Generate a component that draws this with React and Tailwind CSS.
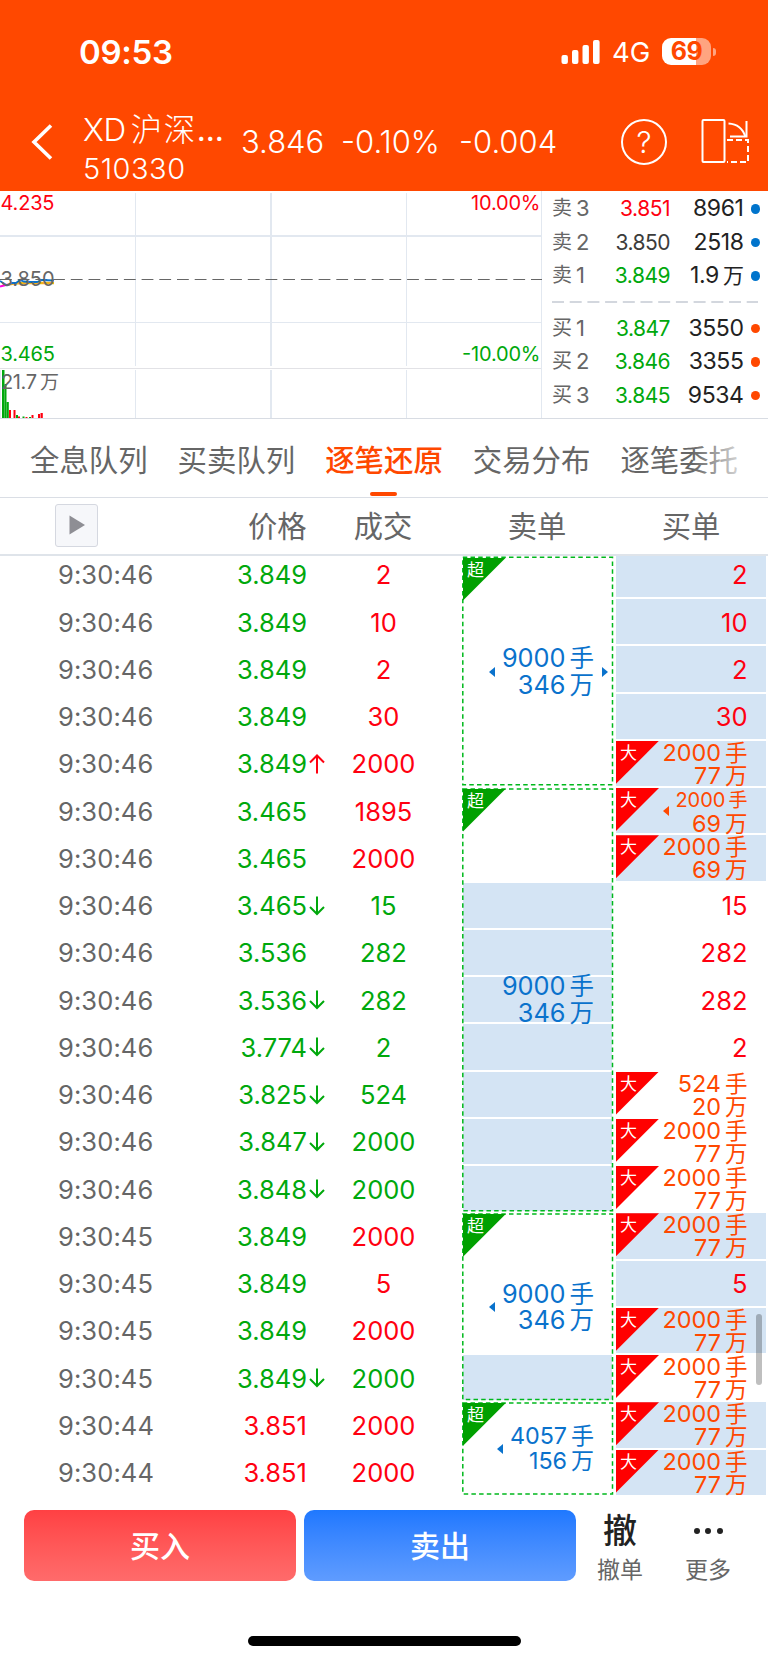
import React from "react";

const trades = [
  { time: "9:30:46", price: "3.849", vol: "2", up: true, buy: "2", fill: true },
  { time: "9:30:46", price: "3.849", vol: "10", up: true, buy: "10", fill: true },
  { time: "9:30:46", price: "3.849", vol: "2", up: true, buy: "2", fill: true },
  { time: "9:30:46", price: "3.849", vol: "30", up: true, buy: "30", fill: true },
  { time: "9:30:46", price: "3.849", dir: "up", vol: "2000", up: true, big: ["2000", "77"], fill: true },
  { time: "9:30:46", price: "3.465", vol: "1895", up: true, big: ["2000", "69"], more: true, fill: true },
  { time: "9:30:46", price: "3.465", vol: "2000", up: true, big: ["2000", "69"], fill: true },
  { time: "9:30:46", price: "3.465", dir: "down", vol: "15", buy: "15" },
  { time: "9:30:46", price: "3.536", vol: "282", buy: "282" },
  { time: "9:30:46", price: "3.536", dir: "down", vol: "282", buy: "282" },
  { time: "9:30:46", price: "3.774", dir: "down", vol: "2", buy: "2" },
  { time: "9:30:46", price: "3.825", dir: "down", vol: "524", big: ["524", "20"] },
  { time: "9:30:46", price: "3.847", dir: "down", vol: "2000", big: ["2000", "77"] },
  { time: "9:30:46", price: "3.848", dir: "down", vol: "2000", big: ["2000", "77"] },
  { time: "9:30:45", price: "3.849", vol: "2000", up: true, big: ["2000", "77"], fill: true },
  { time: "9:30:45", price: "3.849", vol: "5", up: true, buy: "5", fill: true },
  { time: "9:30:45", price: "3.849", vol: "2000", up: true, big: ["2000", "77"], fill: true },
  { time: "9:30:45", price: "3.849", dir: "down", vol: "2000", big: ["2000", "77"] },
  { time: "9:30:44", price: "3.851", high: true, vol: "2000", up: true, big: ["2000", "77"], fill: true },
  { time: "9:30:44", price: "3.851", high: true, vol: "2000", up: true, big: ["2000", "77"], fill: true },
];

const sellGroups = [
  { height: "h-[231px]", lots: "9000", amount: "346", left: true, right: true, filled: 0 },
  { height: "h-[425.25px]", lots: "9000", amount: "346", filled: 7 },
  { height: "h-[189px]", lots: "9000", amount: "346", left: true, filled: 1 },
  { height: "h-[94.5px]", lots: "4057", amount: "156", left: true, small: true, filled: 0 },
];

const book = [
  { side: "卖", level: 3, price: "3.851", color: "text-[#ff0010]", vol: "8961" },
  { side: "卖", level: 2, price: "3.850", color: "text-[#3c3c3c]", vol: "2518" },
  { side: "卖", level: 1, price: "3.849", color: "text-[#00a80c]", vol: "1.9", wan: true },
  { side: "买", level: 1, price: "3.847", color: "text-[#00a80c]", vol: "3550" },
  { side: "买", level: 2, price: "3.846", color: "text-[#00a80c]", vol: "3355" },
  { side: "买", level: 3, price: "3.845", color: "text-[#00a80c]", vol: "9534" },
];

const StatusBar = () => (
  <div className="flex h-[103px] items-center pl-[79px] pr-[52px]">
    <span className="text-[33px] leading-[40px] font-semibold tracking-[-0.3px]">09:53</span>
    <svg className="ml-auto" width="39" height="26" viewBox="0 0 39 26" fill="white">
      <rect x="0.5" y="16" width="6.4" height="9" rx="2" />
      <rect x="11" y="11" width="6.4" height="14" rx="2" />
      <rect x="21.5" y="6" width="6.4" height="19" rx="2" />
      <rect x="32" y="1" width="6.6" height="24" rx="2" />
    </svg>
    <span className="ml-[12px] w-[50px] text-[27.5px] leading-[32px]">4G</span>
    <div className="flex items-center gap-[2px]">
      <div className="flex h-[27px] w-[49px] items-center justify-center rounded-[9px] bg-[linear-gradient(90deg,#fff_34px,#ffa480_34px)] text-[25px] leading-[27px] font-bold tracking-[-0.5px] text-[#ff4800]">
        69
      </div>
      <div className="h-[8px] w-[3px] rounded-r-full bg-[#ffa480]"></div>
    </div>
  </div>
);

const TitleBar = () => (
  <div className="flex h-[88px] items-start font-light">
    <svg className="ml-[30px] mt-[20px]" width="24" height="38" viewBox="0 0 24 38" fill="none">
      <path d="M21 2.5 L4 19 L21 35.5" stroke="white" strokeWidth="3.6" />
    </svg>
    <div className="ml-[29px] w-[158px]">
      <div className="mt-[8px] whitespace-nowrap text-[31.5px] leading-[38px]">
        <span className="tracking-[-0.4px]">XD</span>
        <span className="ml-[5px] tracking-[1.5px]">沪深</span>
        <span className="font-normal">...</span>
      </div>
      <div className="text-[29px] leading-[40px] tracking-[0.5px]">510330</div>
    </div>
    <div className="mt-[20px] flex text-[31px] leading-[38px]">
      <span className="w-[100px]">3.846</span>
      <span className="w-[118px]">-0.10%</span>
      <span className="w-[124px]">-0.004</span>
    </div>
    <div className="ml-[38px] mt-[15.5px] flex h-[46px] w-[46px] items-center justify-center rounded-full border-2 border-white text-[30px] leading-[40px]">
      ?
    </div>
    <svg className="ml-[34px] mt-[15px]" width="50" height="46" viewBox="0 0 50 46" fill="none" stroke="white" strokeWidth="2">
      <rect x="1.5" y="2" width="22" height="42" rx="1" />
      <path d="M27.5 5.5 C37 6 42 11 44.5 19" />
      <path d="M45.5 3 V18.5 H29" />
      <path d="M26 22 H47 V44 H26" strokeDasharray="6 3" />
    </svg>
  </div>
);

const PriceChart = () => (
  <svg width="542" height="227" viewBox="0 1 542 227" fontSize="20">
    <g stroke="#e2e8f0" fill="none">
      <path d="M0 46 H542" strokeWidth="2" />
      <path d="M0 132.5 H542" />
      <path d="M0 178.5 H542" stroke="#e2e2e6" />
      <path d="M135.5 3 V176 M135.5 180 V228" />
      <path d="M271 3 V176 M271 180 V228" strokeWidth="2" />
      <path d="M406.5 3 V176 M406.5 180 V228" />
      <path d="M541.5 1 V228 M0.5 180 V228" />
    </g>
    <path d="M0 89.5 H542" stroke="#666" strokeWidth="1.2" strokeDasharray="11.8 5.9" />
    <path d="M0 96.5 L4 95.5 L8 94.5" stroke="#ff00e0" strokeWidth="2" fill="none" />
    <path d="M8 94.5 L14 93.5 L22 93 L54 93" stroke="#f6b21a" strokeWidth="2.5" fill="none" />
    <path d="M0 91 L7 95.5 L12 93 L16 93 L20 90 L24 91.5 L30 92 L37 92 L42 90 L54 90.5" stroke="#0a72cc" strokeWidth="1.8" fill="none" />
    <text x="0.5" y="20" fill="#ff0010" textLength="54">4.235</text>
    <text x="540.5" y="20" fill="#ff0010" textAnchor="end" textLength="69.5">10.00%</text>
    <text x="0.5" y="95.5" fill="#666" textLength="54">3.850</text>
    <text x="0.5" y="171" fill="#00a80c" textLength="54.5">3.465</text>
    <text x="540.5" y="171" fill="#00a80c" textAnchor="end" textLength="78.5">-10.00%</text>
    <g fill="#00a80c">
      <rect x="2" y="180" width="2.5" height="48" />
      <rect x="4.5" y="194" width="2" height="34" />
      <rect x="6.5" y="212" width="2.3" height="16" />
      <rect x="16" y="225" width="2" height="3" />
      <rect x="22.5" y="226.5" width="2" height="1.5" />
      <rect x="29" y="227" width="2" height="1" />
    </g>
    <g fill="#ff0010">
      <rect x="9" y="220" width="2" height="8" />
      <rect x="13.5" y="220" width="2" height="8" />
      <rect x="18" y="226.5" width="2" height="1.5" />
      <rect x="25.5" y="227" width="2" height="1" />
      <rect x="31.5" y="225" width="2" height="3" />
      <rect x="38" y="224" width="2" height="4" />
      <rect x="40.5" y="223" width="2.3" height="5" />
    </g>
    <text x="1" y="199" fill="#666" textLength="36">21.7</text>
    <text x="40" y="199" fill="#666" fontSize="19">万</text>
  </svg>
);

const OrderBook = () => (
  <div className="flex flex-1 flex-col pt-px">
    {book.map((row, i) => (
      <React.Fragment key={i}>
        {i === 3 && (
          <svg className="mt-[8px] mb-[9px] ml-[10px]" width="206" height="2">
            <path d="M0 1 H206" stroke="#d3d7de" strokeWidth="2" strokeDasharray="12 5.7" />
          </svg>
        )}
        <div className="flex h-[33.5px] items-center pl-[10px] leading-[33px]">
          <span className="w-[20px] text-[20px] text-[#666]">{row.side}</span>
          <span className="ml-[4px] w-[20px] text-[22px] text-[#666]">{row.level}</span>
          <span className={`w-[74px] text-right text-[21px] tracking-[-0.5px] ${row.color}`}>{row.price}</span>
          <span className="w-[73.5px] text-right text-[23px] tracking-[-0.4px] text-[#222]">
            {row.vol}
            {row.wan && <span className="ml-[4px] text-[21px]">万</span>}
          </span>
          <span className={`ml-[7px] h-[9.5px] w-[9.5px] rounded-full ${i < 3 ? "bg-[#0074cc]" : "bg-[#ff4800]"}`}></span>
        </div>
      </React.Fragment>
    ))}
  </div>
);

const Tabs = () => (
  <div className="relative flex h-[79px] justify-between border-b border-[#dadee5] pl-[30px] pr-[30px] text-[29.4px] leading-[84px] text-[#666]">
    <span>全息队列</span>
    <span>买卖队列</span>
    <span className="relative font-medium text-[#ff4800]">
      逐笔还原
      <i className="absolute bottom-[1.5px] left-[45px] h-[4px] w-[27px] rounded-full bg-[#ff4800]"></i>
    </span>
    <span>交易分布</span>
    <span>逐笔委托</span>
    <div className="absolute right-0 top-0 h-[76px] w-[76px] bg-gradient-to-r from-white/0 to-white to-85%"></div>
  </div>
);

const TableHead = () => (
  <div className="flex h-[58px] items-center border-b-2 border-[#dfe4ea] text-[29.3px] leading-[56px] text-[#666]">
    <div className="-mt-[2px] ml-[55px] flex h-[43px] w-[43px] items-center justify-center rounded-[3px] border border-[#d5d8e0] bg-[#f6f7fa]">
      <svg width="18" height="20" viewBox="0 0 18 20">
        <path d="M1.5 0.5 L17 10 L1.5 19.5 Z" fill="#8e8e94" />
      </svg>
    </div>
    <span className="w-[208.5px] pt-[2px] text-right">价格</span>
    <span className="w-[153px] pt-[2px] text-center">成交</span>
    <span className="w-[155px] pt-[2px] text-center">卖单</span>
    <span className="w-[153px] pt-[2px] text-center">买单</span>
  </div>
);

const Arrow = ({ dir }) => (
  <svg width="16" height="20" viewBox="0 0 16 20" fill="none" strokeWidth="2" stroke={dir === "up" ? "#ff0010" : "#00a80c"}>
    {dir === "up" ? <path d="M8 19.5 V1.5 M1 8.5 L8 1.5 L15 8.5" /> : <path d="M8 0.5 V18 M1 11 L8 18 L15 11" />}
  </svg>
);

const TradeRow = ({ row }) => (
  <div className="flex h-[47.25px] items-center pt-[1px] text-[25.5px] leading-[45px]">
    <span className="w-[154px] pl-[58px] tracking-[0.1px] text-[#666]">{row.time}</span>
    <span className={`w-[153px] text-right ${row.high ? "text-[#ff0010]" : "text-[#00a80c]"}`}>{row.price}</span>
    <span className="flex w-[20px] pl-[2px]">{row.dir && <Arrow dir={row.dir} />}</span>
    <span className={`w-[113px] text-center ${row.up ? "text-[#ff0010]" : "text-[#00a80c]"}`}>{row.vol}</span>
  </div>
);

// folded corner marking large orders
const Corner = ({ label, color }) => (
  <div className={`absolute left-0 top-0 h-[43px] w-[43px] pl-[4px] text-[17px] text-white [clip-path:polygon(0_0,100%_0,0_100%)] ${color}`}>
    <span className="block pt-[2px] leading-[20px]">{label}</span>
  </div>
);

const SellGroup = ({ group }) => (
  <div className={`relative ${group.height}`}>
    <div className="flex h-full w-[150px] flex-col justify-end pl-px">
      {Array.from({ length: group.filled }).map((_, i) => (
        <div key={i} className="h-[47.25px] py-[1px]">
          <div className="h-full bg-[#d4e4f4]"></div>
        </div>
      ))}
    </div>
    <svg className="absolute inset-0 h-full w-full">
      <rect
        className="h-[calc(100%-3.5px)] w-[149.7px]"
        x="0.8"
        y={group.right ? 1.2 : 2}
        fill="none"
        stroke="#00b81c"
        strokeWidth="1.5"
        strokeDasharray="4.5 3.2"
      />
    </svg>
    <div className="absolute left-px top-[1.5px]">
      <Corner label="超" color="bg-[#00a000]" />
    </div>
    <div className="absolute inset-0 flex items-center justify-end pt-px pr-[20px] text-[#0a72cc]">
      {group.left && (
        <svg className={group.small ? "mr-[7px]" : "mr-[7px]"} width="6" height="10" viewBox="0 0 6 10">
          <path d="M0 5 L6 0 V10 Z" fill="currentColor" />
        </svg>
      )}
      <div className={`text-right ${group.small ? "text-[23.3px] leading-[23.7px]" : "text-[25.3px] leading-[25.7px]"}`}>
        <div>
          {group.lots}
          <span className={group.small ? "ml-[4px] text-[23px]" : "ml-[4px] text-[24.5px]"}>手</span>
        </div>
        <div>
          {group.amount}
          <span className={group.small ? "ml-[4px] text-[23px]" : "ml-[4px] text-[24.5px]"}>万</span>
        </div>
      </div>
      {group.right && (
        <svg className="absolute right-[6px]" width="6" height="10" viewBox="0 0 6 10">
          <path d="M6 5 L0 0 V10 Z" fill="currentColor" />
        </svg>
      )}
    </div>
  </div>
);

const BuyCell = ({ row }) => (
  <div className="h-[47.25px] py-[1px]">
    <div className={`relative flex h-full items-center justify-end pt-[1px] pr-[18.5px] ${row.fill ? "bg-[#d4e4f4]" : ""}`}>
      {row.big ? (
        <>
          <Corner label="大" color="bg-[#ff0000]" />
          {row.more && (
            <svg className="mr-[6px]" width="6" height="10" viewBox="0 0 6 10">
              <path d="M0 5 L6 0 V10 Z" fill="#ff4800" />
            </svg>
          )}
          <div className="text-right text-[23.4px] leading-[23px] text-[#ff4800]">
            <div className={row.more ? "pt-px text-[20px] leading-[22px]" : ""}>
              {row.big[0]}
              <span className={row.more ? "ml-[3px] text-[19px]" : "ml-[4px] text-[22.5px]"}>手</span>
            </div>
            <div>
              {row.big[1]}
              <span className="ml-[4px] text-[22.5px]">万</span>
            </div>
          </div>
        </>
      ) : (
        <span className="text-[25.5px] leading-[43px] text-[#ff0010]">{row.buy}</span>
      )}
    </div>
  </div>
);

const BottomBar = () => (
  <div className="flex h-[167px] flex-col">
    <div className="flex pl-[24px] pt-[14px] text-[30px] leading-[72px] font-medium text-white">
      <div className="h-[71px] w-[272px] rounded-[10px] bg-gradient-to-b from-[#ff4043] to-[#ff6b6b] text-center">买入</div>
      <div className="ml-[8px] h-[71px] w-[272px] rounded-[10px] bg-gradient-to-b from-[#1e78ff] to-[#5f9cff] text-center">卖出</div>
      <div className="flex w-[88px] flex-col items-center text-[#222]">
        <span className="text-[34px] leading-[41px]">撤</span>
        <span className="text-[23px] leading-[38px] font-normal text-[#666]">撤单</span>
      </div>
      <div className="flex w-[88px] flex-col items-center text-[#222]">
        <span className="flex h-[41px] items-center gap-[5.5px]">
          <i className="h-[6px] w-[6px] rounded-full bg-[#222]"></i>
          <i className="h-[6px] w-[6px] rounded-full bg-[#222]"></i>
          <i className="h-[6px] w-[6px] rounded-full bg-[#222]"></i>
        </span>
        <span className="text-[23px] leading-[38px] font-normal text-[#666]">更多</span>
      </div>
    </div>
    <div className="mx-auto mt-auto mb-[17px] h-[10px] w-[273px] rounded-full bg-black"></div>
  </div>
);

const App = () => {
  return (
    <div className="h-[1663px] w-[768px] overflow-hidden bg-white font-['Inter','Noto_Sans_CJK_SC',sans-serif]">
      <header className="h-[191px] bg-[#ff4800] text-white">
        <StatusBar />
        <TitleBar />
      </header>
      <section className="flex h-[228px] border-b border-[#d8dce3]">
        <PriceChart />
        <OrderBook />
      </section>
      <Tabs />
      <TableHead />
      <section className="relative flex h-[940px]">
        <div className="-mt-[5.2px] w-[462px]">
          {trades.map((row, i) => (
            <TradeRow key={i} row={row} />
          ))}
        </div>
        <div className="w-[152px]">
          {sellGroups.map((group, i) => (
            <SellGroup key={i} group={group} />
          ))}
        </div>
        <div className="-mt-[5.2px] ml-[2px] w-[150px] [clip-path:inset(5.2px_0_-10px_0)]">
          {trades.map((row, i) => (
            <BuyCell key={i} row={row} />
          ))}
        </div>
        <div className="absolute right-[6px] top-[758px] h-[71px] w-[6px] rounded-full bg-black/25"></div>
      </section>
      <BottomBar />
    </div>
  );
};

export default App;
